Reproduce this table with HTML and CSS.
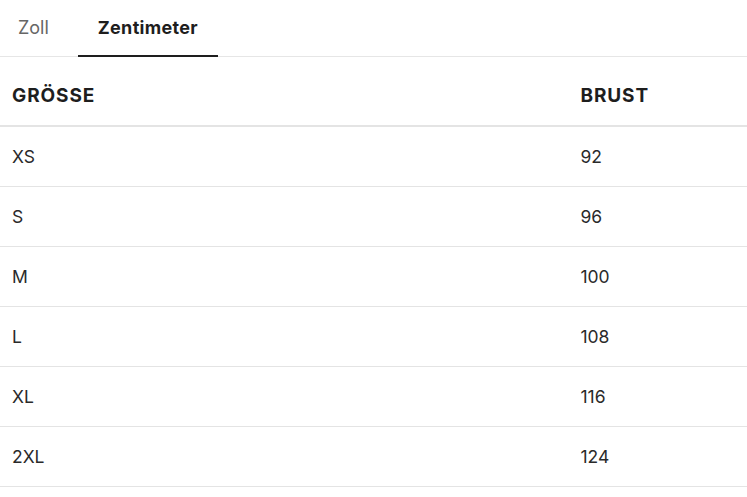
FILE: index.html
```html
<!DOCTYPE html>
<html lang="de">
<head>
<meta charset="utf-8">
<link rel="stylesheet" href="styles.css">
</head>
<body>
<div class="tabs">
  <div class="tab">Zoll</div>
  <div class="tab active">Zentimeter</div>
</div>
<table class="sizes">
  <thead>
    <tr><th class="c1">GRÖSSE</th><th class="c2">BRUST</th></tr>
  </thead>
  <tbody>
    <tr><td>XS</td><td>92</td></tr>
    <tr><td>S</td><td>96</td></tr>
    <tr><td>M</td><td>100</td></tr>
    <tr><td>L</td><td>108</td></tr>
    <tr><td>XL</td><td>116</td></tr>
    <tr><td>2XL</td><td>124</td></tr>
  </tbody>
</table>
</body>
</html>
```
FILE: styles.css
```css
html, body {
  margin: 0;
  padding: 0;
  background: #fff;
}
body {
  font-family: "Inter", "Liberation Sans", sans-serif;
  color: #2a2a2a;
}
.tabs {
  display: flex;
  height: 56px;
  border-bottom: 1px solid #e6e6e6;
  box-sizing: content-box;
}
.tab {
  display: flex;
  align-items: center;
  padding: 0 20px;
  font-size: 18px;
  color: #666;
  margin-bottom: -1px;
  border-bottom: 2px solid transparent;
  box-sizing: border-box;
  height: 57px;
}
.tab:first-child {
  padding-left: 18px;
  padding-right: 29px;
}
.tab.active {
  color: #1e1e1e;
  font-weight: 700;
  letter-spacing: 0.3px;
  border-bottom-color: #1e1e1e;
}
.sizes {
  width: 100%;
  border-collapse: collapse;
  font-size: 17.5px;
}
.sizes th {
  text-align: left;
  font-weight: 700;
  font-size: 19px;
  letter-spacing: 0.9px;
  color: #1e1e1e;
  height: 59px;
  padding: 9px 12px 0;
  border-bottom: 2px solid #e4e4e4;
}
.sizes .c1 { width: 76.1%; }
.sizes td {
  height: 59px;
  padding: 0 12px;
  border-bottom: 1px solid #e4e4e4;
  color: #2a2a2a;
}
```
